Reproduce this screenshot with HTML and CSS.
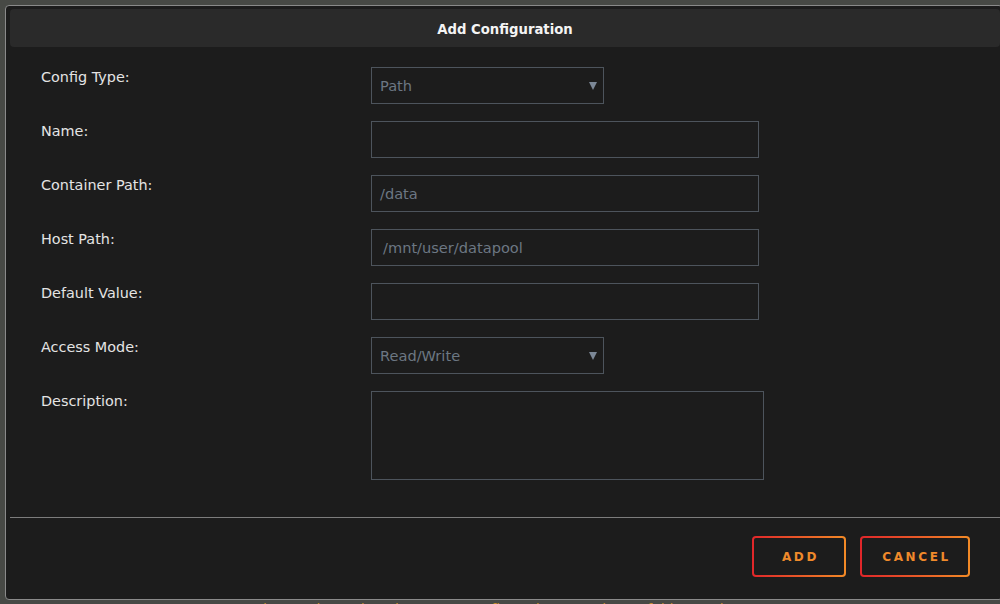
FILE: index.html
```html
<!DOCTYPE html>
<html>
<head>
<meta charset="utf-8">
<title>Add Configuration</title>
<link rel="stylesheet" href="styles.css">
</head>
<body>
<div class="dialog">
  <div class="titlebar">Add Configuration</div>
  <form class="form">
    <div class="row">
      <label class="label">Config Type:</label>
      <div class="select sel-short"><span>Path</span><span class="caret"></span></div>
    </div>
    <div class="row">
      <label class="label">Name:</label>
      <div class="input"></div>
    </div>
    <div class="row">
      <label class="label">Container Path:</label>
      <div class="input"><span>/data</span></div>
    </div>
    <div class="row">
      <label class="label">Host Path:</label>
      <div class="input"><span class="indent">/mnt/user/datapool</span></div>
    </div>
    <div class="row">
      <label class="label">Default Value:</label>
      <div class="input"></div>
    </div>
    <div class="row">
      <label class="label">Access Mode:</label>
      <div class="select sel-short"><span>Read/Write</span><span class="caret"></span></div>
    </div>
    <div class="row">
      <label class="label">Description:</label>
      <div class="textarea"></div>
    </div>
  </form>
  <div class="divider"></div>
  <div class="footer">
    <button class="btn btn-add">ADD</button>
    <button class="btn btn-cancel">CANCEL</button>
  </div>
</div>
<p class="behind">Container Path needs to be set to /config and Host Path to a folder on the array</p>
</body>
</html>
```

FILE: styles.css
```css
html, body {
  margin: 0;
  padding: 0;
  height: 100%;
  overflow: hidden;
}
body {
  background: #474945;
  font-family: "DejaVu Sans", "Noto Sans", sans-serif;
  color: #e2e2e2;
}
.dialog {
  box-sizing: border-box;
  width: 998px;
  margin: 5px 0 0 5px;
  border: 1px solid #8a8a8a;
  border-radius: 4px;
  background: #1c1c1c;
  padding: 3px 2px 0 4px;
}
.titlebar {
  height: 38px;
  line-height: 40px;
  background: #2a2a2a;
  border-radius: 4px;
  text-align: center;
  font-family: "DejaVu Sans Condensed", "DejaVu Sans", sans-serif;
  font-weight: bold;
  font-size: 14.7px;
  color: #f4f4f4;
}
.form {
  padding: 20px 0 0 31px;
  margin: 0;
}
.row {
  display: grid;
  grid-template-columns: 330px auto;
  margin-bottom: 17px;
}
.row:last-child {
  margin-bottom: 0;
}
.label {
  font-size: 14.4px;
  line-height: 20px;
  color: #e4e4e4;
}
.input, .select, .textarea {
  box-sizing: border-box;
  border: 1px solid #4d545c;
  background: #1c1c1c;
  color: #6c7783;
  font-size: 14.6px;
  display: flex;
  align-items: center;
  padding-left: 8px;
}
.indent {
  padding-left: 3px;
}
.input {
  width: 388px;
  height: 37px;
}
.select {
  width: 233px;
  height: 37px;
  justify-content: space-between;
  padding-right: 6px;
}
.caret {
  width: 0;
  height: 0;
  border-left: 4px solid transparent;
  border-right: 4px solid transparent;
  border-top: 8px solid #7b8796;
}
.textarea {
  width: 393px;
  height: 89px;
}
.divider {
  height: 1px;
  background: #7c7c7c;
  margin: 37px 0 0 0;
}
.footer {
  display: flex;
  justify-content: flex-end;
  gap: 14px;
  padding: 18px 30px 22px 0;
}
.btn {
  box-sizing: border-box;
  height: 41px;
  border: 2px solid transparent;
  border-radius: 4px;
  background: linear-gradient(#1c1c1c, #1c1c1c) padding-box,
              linear-gradient(90deg, #e0262a, #f28a26) border-box;
  color: #f08a2b;
  font-family: "DejaVu Sans", sans-serif;
  font-weight: bold;
  font-size: 12px;
  letter-spacing: 2.6px;
  cursor: pointer;
  padding: 0 0 0 3px;
}
.btn-add {
  width: 94px;
}
.btn-cancel {
  width: 110px;
}
.behind {
  margin: 0;
  padding-top: 1px;
  text-align: center;
  font-size: 14px;
  line-height: 16px;
  color: #c98f2c;
}
```
